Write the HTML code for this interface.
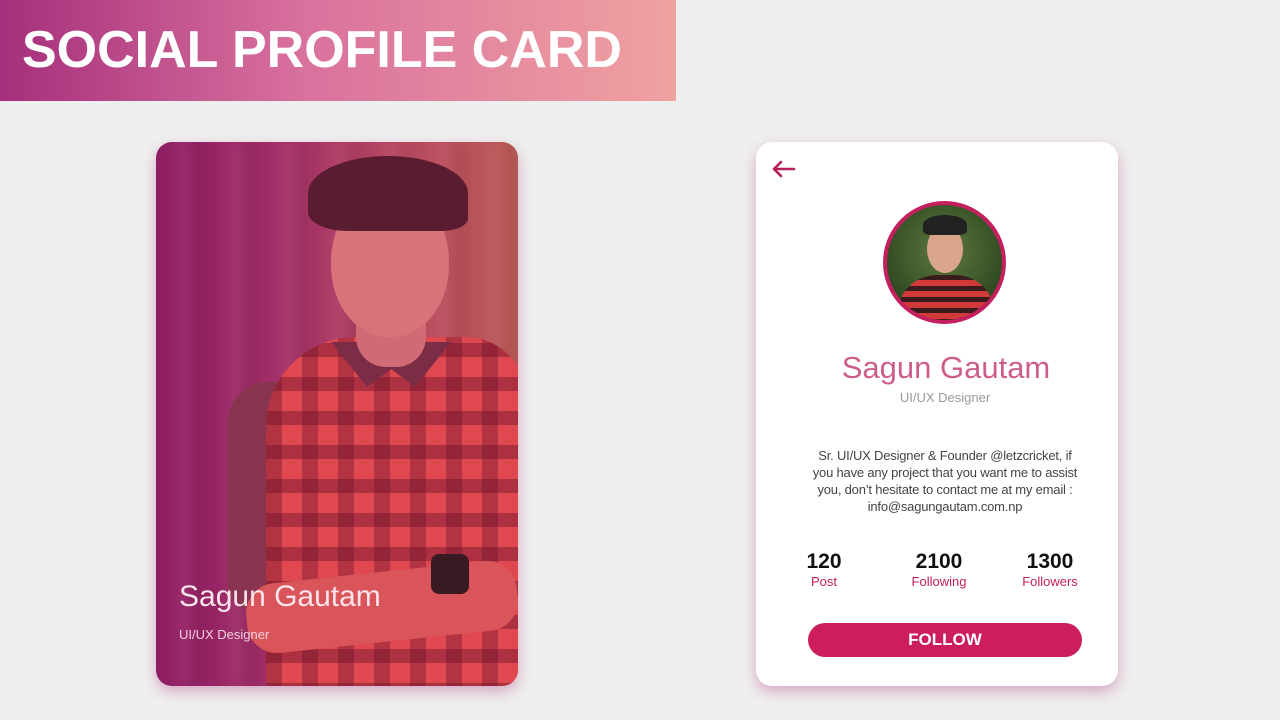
<!DOCTYPE html>
<html><head><meta charset="utf-8"><style>
*{margin:0;padding:0;box-sizing:border-box}
body{width:1280px;height:720px;background:#efefef;font-family:"Liberation Sans",sans-serif;position:relative;overflow:hidden}
.banner{position:absolute;left:0;top:0;width:676px;height:101px;background:linear-gradient(90deg,#a52f7b 0%,#d9719e 45%,#f0a2a0 100%)}
.banner h1{position:absolute;left:22px;top:20px;color:#fff;font-size:52px;font-weight:bold}
.card{position:absolute;top:142px;width:362px;height:544px;border-radius:16px;overflow:hidden;box-shadow:0 6px 14px rgba(170,40,120,.35)}
.left{left:156px;background:linear-gradient(90deg,#8e1d63 0%,#a33068 35%,#b94a60 70%,#b95a55 100%)}
.right{left:756px;background:#fff}
.abs{position:absolute}
</style></head><body>
<div class="banner"><h1>SOCIAL PROFILE CARD</h1></div>

<div class="card left">
 <div class="abs" style="left:0;top:0;width:362px;height:544px;filter:blur(6px);background:repeating-linear-gradient(90deg,rgba(255,255,255,0) 0 20px,rgba(255,200,220,.08) 20px 34px,rgba(0,0,0,.05) 34px 52px)"></div>
 <div class="abs" style="left:72px;top:240px;width:90px;height:230px;border-radius:40px 20px 10px 30px;background:#8a3550"></div>
 <div class="abs" style="left:110px;top:195px;width:260px;height:360px;border-radius:90px 60px 0 0;background:
  repeating-linear-gradient(0deg,rgba(110,20,45,.45) 0 14px,rgba(0,0,0,0) 14px 34px),
  repeating-linear-gradient(90deg,rgba(110,20,45,.4) 0 16px,rgba(0,0,0,0) 16px 36px),#e0484f"></div>
 <div class="abs" style="left:175px;top:200px;width:120px;height:45px;background:#7a2d45;clip-path:polygon(0 0,100% 0,70% 100%,50% 60%,30% 100%)"></div>
 <div class="abs" style="left:200px;top:170px;width:70px;height:55px;background:#d06a74;border-radius:0 0 30px 30px"></div>
 <div class="abs" style="left:175px;top:45px;width:118px;height:150px;border-radius:50% 50% 48% 48%;background:#d9737a"></div>
 <div class="abs" style="left:152px;top:14px;width:160px;height:75px;border-radius:60% 60% 20% 30%;background:#5a1c30"></div>
 <div class="abs" style="left:90px;top:430px;width:272px;height:70px;border-radius:30px;background:#d9555a;transform:rotate(-6deg)"></div>
 <div class="abs" style="left:275px;top:412px;width:38px;height:40px;border-radius:8px;background:#3a1a22"></div>
 <div class="abs" style="left:23px;top:438px;color:#fbe3ec;font-size:30px">Sagun Gautam</div>
 <div class="abs" style="left:23px;top:485px;color:#f6d0de;font-size:13px">UI/UX Designer</div>
</div>

<div class="card right">
 <svg class="abs" style="left:14px;top:17px" width="26" height="20" viewBox="0 0 26 20"><path d="M24 10H4M11 3L4 10l7 7" fill="none" stroke="#b71f5c" stroke-width="2.6" stroke-linecap="round" stroke-linejoin="round"/></svg>
 <div class="abs" style="left:127px;top:59px;width:123px;height:123px;border-radius:50%;border:4px solid #c41f5f;overflow:hidden;background:radial-gradient(circle at 50% 40%,#5f7a40,#2f4a22 70%)">
  <div class="abs" style="left:10px;top:70px;width:98px;height:60px;border-radius:40px 40px 0 0;background:repeating-linear-gradient(0deg,#3a1c1c 0 5px,#d23a3a 5px 11px)"></div>
  <div class="abs" style="left:40px;top:20px;width:36px;height:48px;border-radius:50%;background:#d9a58c"></div>
  <div class="abs" style="left:36px;top:10px;width:44px;height:20px;border-radius:50% 50% 20% 20%;background:#222"></div>
 </div>
 <div class="abs" style="left:0;width:380px;top:208px;text-align:center;color:#cd5e8c;font-size:31px">Sagun Gautam</div>
 <div class="abs" style="left:0;width:378px;top:248px;text-align:center;color:#999;font-size:13px">UI/UX Designer</div>
 <div class="abs" style="left:52px;width:274px;top:305px;text-align:center;color:#444;font-size:13px;line-height:17px;letter-spacing:-0.2px">Sr. UI/UX Designer &amp; Founder @letzcricket, if you have any project that you want me to assist you, don’t hesitate to contact me at my email : info@sagungautam.com.np</div>
 <div class="abs" style="left:28px;width:80px;top:408px;text-align:center"><div style="font-size:21px;font-weight:bold;color:#111">120</div><div style="font-size:13px;color:#c41f5f">Post</div></div>
 <div class="abs" style="left:143px;width:80px;top:408px;text-align:center"><div style="font-size:21px;font-weight:bold;color:#111">2100</div><div style="font-size:13px;color:#c41f5f">Following</div></div>
 <div class="abs" style="left:254px;width:80px;top:408px;text-align:center"><div style="font-size:21px;font-weight:bold;color:#111">1300</div><div style="font-size:13px;color:#c41f5f">Followers</div></div>
 <div class="abs" style="left:52px;top:481px;width:274px;height:34px;border-radius:17px;background:#cc1e5e;color:#fff;font-weight:bold;font-size:17px;text-align:center;line-height:34px">FOLLOW</div>
</div>
</body></html>
